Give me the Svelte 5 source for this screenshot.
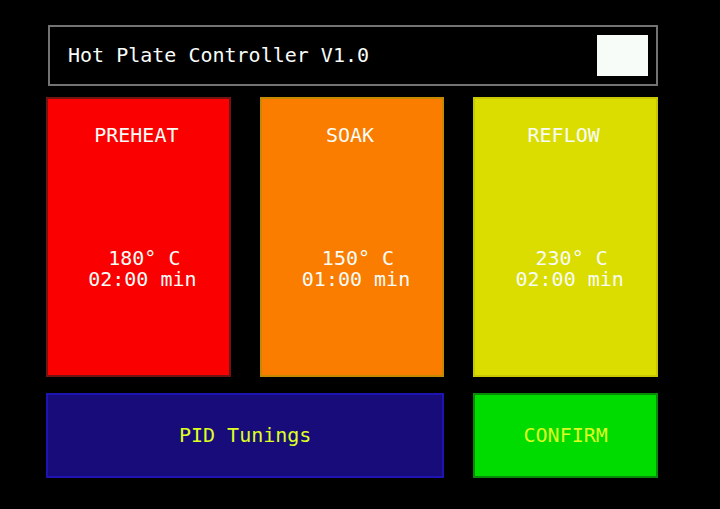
<script>
  const stages = [
    { id: 'preheat', name: 'PREHEAT', temp: 180, time: '02:00' },
    { id: 'soak', name: 'SOAK', temp: 150, time: '01:00' },
    { id: 'reflow', name: 'REFLOW', temp: 230, time: '02:00' }
  ];
  let active = $state(false);
</script>

<main>
  <header>
    <h1>Hot Plate Controller V1.0</h1>
    <button
      type="button"
      class="indicator"
      aria-label="Heater"
      aria-pressed={active}
      onclick={() => (active = !active)}
    ></button>
  </header>

  <div class="grid">
    {#each stages as stage (stage.id)}
      <button type="button" class="stage {stage.id}">
        <span class="name">{stage.name}</span>
        <span class="values">
          <span class="temp">{stage.temp}° C</span>
          <span>{stage.time} min</span>
        </span>
      </button>
    {/each}
    <button type="button" class="action tunings">PID Tunings</button>
    <button type="button" class="action confirm">CONFIRM</button>
  </div>
</main>

<style>
  :global(html),
  :global(body) {
    background: #000;
  }

  main {
    box-sizing: border-box;
    min-height: 100vh;
    padding: 25px 62px 31px 46px;
    background: #000;
    color: #f7fcf8;
    font-family: "DejaVu Sans Mono", "Liberation Mono", monospace;
    font-size: 20px;
    line-height: 21px;
  }

  header {
    display: flex;
    align-items: center;
    justify-content: space-between;
    margin: 0 0 11px 2px;
    padding: 8px 8px 8px 18px;
    border: 2px solid #737373;
  }

  h1 {
    margin: 0;
    font-size: 20px;
    font-weight: 400;
  }

  button {
    box-sizing: border-box;
    margin: 0;
    padding: 0;
    border: 2px solid;
    border-radius: 0;
    color: inherit;
    font: inherit;
    cursor: pointer;
  }

  .indicator {
    width: 51px;
    height: 41px;
    border: 0;
    background: #f7fcf8;
  }

  .grid {
    display: grid;
    grid-template-columns: repeat(3, 1fr);
    gap: 16px 29px;
  }

  .stage {
    display: flex;
    flex-direction: column;
    align-items: stretch;
    gap: 102px;
    min-height: 280px;
    padding-top: 26px;
    padding-bottom: 85px;
  }

  .name {
    padding-right: 4px;
  }

  .values {
    display: flex;
    flex-direction: column;
    padding-left: 8px;
  }

  .temp {
    padding-left: 4px;
  }

  .preheat {
    background: #fb0000;
    border-color: #731414;
  }

  .soak {
    background: #fb7d00;
    border-color: #c68a00;
  }

  .reflow {
    background: #dbdd00;
    border-color: #c8c800;
  }

  .action {
    min-height: 85px;
    color: #deff21;
  }

  .tunings {
    grid-column: span 2;
    background: #180c7b;
    border-color: #1e14b4;
  }

  .confirm {
    background: #00db00;
    border-color: #088a08;
  }
</style>
